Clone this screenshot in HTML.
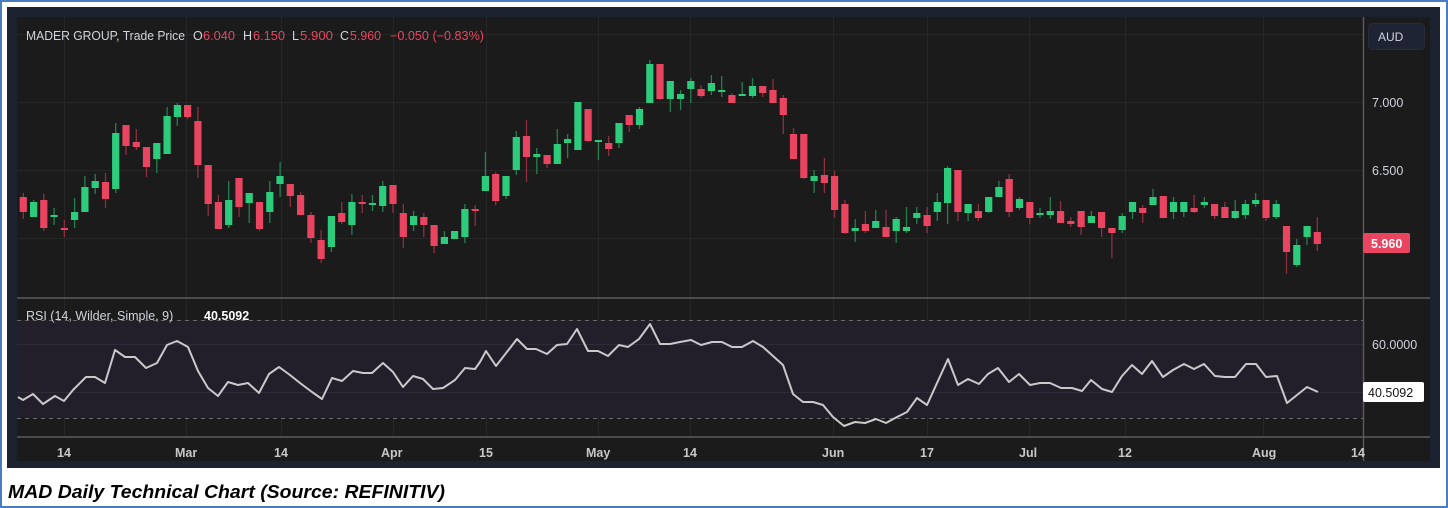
<!DOCTYPE html>
<html><head><meta charset="utf-8"><style>
html,body{margin:0;padding:0;background:#fff;width:1448px;height:508px;overflow:hidden}
svg{display:block}
</style></head><body>
<svg id="s" width="1448" height="508" xmlns="http://www.w3.org/2000/svg" font-family="Liberation Sans, sans-serif">
<rect x="0" y="0" width="1448" height="508" fill="#fff"/>
<rect x="1" y="1" width="1446" height="506" fill="none" stroke="#4a7cc4" stroke-width="2"/>
<rect x="7" y="7" width="1433" height="461" fill="#1d2230"/>
<rect x="17" y="17" width="1413" height="444" fill="#1b1b1b"/>
<g stroke="#272727" stroke-width="1">
<line x1="17" y1="34.5" x2="1363" y2="34.5"/><line x1="17" y1="102.5" x2="1363" y2="102.5"/>
<line x1="17" y1="170.5" x2="1363" y2="170.5"/><line x1="17" y1="238.5" x2="1363" y2="238.5"/>
<line x1="64.5" y1="17" x2="64.5" y2="437"/><line x1="186.5" y1="17" x2="186.5" y2="437"/>
<line x1="281.5" y1="17" x2="281.5" y2="437"/><line x1="393.5" y1="17" x2="393.5" y2="437"/>
<line x1="486.5" y1="17" x2="486.5" y2="437"/><line x1="598.5" y1="17" x2="598.5" y2="437"/>
<line x1="690.5" y1="17" x2="690.5" y2="437"/><line x1="833.5" y1="17" x2="833.5" y2="437"/>
<line x1="927.5" y1="17" x2="927.5" y2="437"/><line x1="1029.5" y1="17" x2="1029.5" y2="437"/>
<line x1="1125.5" y1="17" x2="1125.5" y2="437"/><line x1="1263.5" y1="17" x2="1263.5" y2="437"/>
</g>
<rect x="17" y="320" width="1346" height="98" fill="#241f2c" fill-opacity="0.9"/>
<g stroke="#2f2b38" stroke-width="1"><line x1="17" y1="344.5" x2="1363" y2="344.5"/><line x1="17" y1="392.5" x2="1363" y2="392.5"/></g>
<g stroke="#6a6a6a" stroke-width="1" stroke-dasharray="4 4"><line x1="17" y1="320.5" x2="1363" y2="320.5"/><line x1="17" y1="418.5" x2="1363" y2="418.5"/></g>
<g id="candles"></g>
<polyline fill="none" stroke="#c9c9cc" stroke-width="2" stroke-linejoin="round" points="18,397 23,400 33,394 43,404 55,396 64,401 73,390 86,377 95,377 105,383 115,350 125,357 135,357 146,368 157,363 167,345 177,341 188,347 198,371 208,388 218,396 228,382 238,385 248,383 259,393 269,374 279,367 290,375 300,383 312,392 322,399 332,378 342,381 353,371 363,373 372,373 383,363 393,372 403,387 413,376 423,379 433,389 443,388 455,380 465,368 475,369 480,362 486,351 496,366 517,339 527,349 536,349 547,354 557,345 567,344 577,329 588,351 598,351 608,356 619,345 628,347 639,339 650,324 660,344 670,344 680,342 691,340 701,345 712,342 722,342 732,347 742,347 753,341 763,347 773,356 783,365 793,394 803,402 813,402 823,405 833,417 844,426 855,422 865,423 876,419 886,423 897,417 907,412 917,398 927,405 948,359 958,385 968,379 979,384 988,374 998,368 1009,382 1019,374 1030,385 1040,383 1050,383 1061,388 1072,388 1082,391 1091,380 1102,389 1112,392 1122,376 1132,365 1142,374 1152,361 1163,377 1173,370 1184,364 1194,369 1204,364 1215,376 1225,377 1235,377 1246,364 1256,364 1266,377 1277,376 1287,403 1297,395 1307,387 1318,392"/>
<g stroke="#4c4c4c" stroke-width="2"><line x1="17" y1="298" x2="1430" y2="298"/><line x1="17" y1="437" x2="1430" y2="437"/></g>
<line x1="1363.5" y1="17" x2="1363.5" y2="461" stroke="#5a5a5a" stroke-width="1.5"/>
<rect x="1368.5" y="23.5" width="56" height="26" rx="4" fill="#1e2433" stroke="#262c3a"/>
<text x="1378" y="41" font-size="12" fill="#d1d4dc">AUD</text>
<g font-size="12.5" fill="#d1d4dc">
<text x="1372" y="107">7.000</text><text x="1372" y="175">6.500</text>
<text x="1372" y="349">60.0000</text>
</g>
<rect x="1363" y="233" width="47" height="20" rx="2" fill="#e94560"/>
<text x="1371" y="248" font-size="12.5" fill="#fff" font-weight="bold">5.960</text>
<rect x="1363" y="382" width="61" height="20" rx="2" fill="#fff"/>
<text x="1368" y="397" font-size="12.5" fill="#131313">40.5092</text>
<g font-size="12.5" fill="#c8c8c8" font-weight="bold">
<text x="57" y="457">14</text><text x="175" y="457">Mar</text><text x="274" y="457">14</text>
<text x="381" y="457">Apr</text><text x="479" y="457">15</text><text x="586" y="457">May</text>
<text x="683" y="457">14</text><text x="822" y="457">Jun</text><text x="920" y="457">17</text>
<text x="1019" y="457">Jul</text><text x="1118" y="457">12</text><text x="1252" y="457">Aug</text>
<text x="1351" y="457">14</text>
</g>
<g font-size="12.5">
<text x="26" y="40" fill="#d1d4dc" textLength="159" lengthAdjust="spacingAndGlyphs">MADER GROUP, Trade Price</text>
<text x="193" y="40" fill="#d1d4dc">O</text><text x="203" y="40" fill="#e94560" textLength="32" lengthAdjust="spacingAndGlyphs">6.040</text>
<text x="243" y="40" fill="#d1d4dc">H</text><text x="253" y="40" fill="#e94560" textLength="32" lengthAdjust="spacingAndGlyphs">6.150</text>
<text x="292" y="40" fill="#d1d4dc">L</text><text x="300" y="40" fill="#e94560" textLength="33" lengthAdjust="spacingAndGlyphs">5.900</text>
<text x="340" y="40" fill="#d1d4dc">C</text><text x="350" y="40" fill="#e94560" textLength="31" lengthAdjust="spacingAndGlyphs">5.960</text>
<text x="390" y="40" fill="#e94560" textLength="94" lengthAdjust="spacingAndGlyphs">−0.050 (−0.83%)</text>
<text x="26" y="320" fill="#d1d4dc">RSI (14, Wilder, Simple, 9)</text>
<text x="204" y="320" fill="#ffffff" font-weight="bold">40.5092</text>
</g>
<text x="8" y="498" font-size="18" font-weight="bold" font-style="italic" fill="#000" textLength="437" lengthAdjust="spacingAndGlyphs">MAD Daily Technical Chart (Source: REFINITIV)</text>
</svg>
<script>
var d=[[197,212,193,219,0],[202,217,200,217,1],[200,228,194,231,0],[215,217,208,225,1],[228,229,220,237,0],[212,220,198,228,1],[187,212,176,212,1],[181,188,174,194,1],[182,199,173,208,0],[133,189,123,193,1],[125,146,125,155,0],[142,147,129,150,0],[147,167,147,177,0],[143,159,143,173,1],[116,154,107,154,1],[105,117,103,126,1],[105,117,105,119,0],[121,165,107,178,0],[165,204,165,216,0],[202,229,195,229,0],[200,225,181,228,1],[178,207,178,217,0],[193,203,193,223,1],[202,229,202,231,0],[192,212,181,223,1],[176,184,162,197,1],[184,196,184,207,0],[195,215,192,215,0],[215,238,212,243,0],[240,259,230,263,0],[216,247,216,252,1],[213,222,202,224,0],[202,225,194,235,1],[202,204,195,213,0],[203,204,195,211,1],[186,206,181,212,1],[185,204,185,213,0],[213,237,204,248,0],[216,225,211,231,1],[217,225,213,237,0],[225,246,225,253,0],[237,244,231,244,1],[231,239,231,239,1],[209,237,204,243,1],[209,211,205,226,0],[176,191,152,191,1],[174,201,172,205,0],[176,196,176,199,1],[137,170,131,175,1],[136,157,120,182,0],[154,157,148,174,1],[155,164,155,168,0],[144,164,129,164,1],[139,143,134,158,1],[102,150,102,150,1],[109,141,109,142,0],[140,141,140,160,1],[143,149,136,156,0],[123,143,123,148,1],[115,125,115,132,0],[109,125,107,129,1],[64,103,60,103,1],[64,99,64,100,0],[81,99,81,112,1],[94,99,90,110,1],[81,89,78,103,1],[89,96,85,98,0],[83,91,75,95,1],[90,91,76,97,1],[95,103,93,103,0],[94,95,82,95,1],[86,96,78,98,1],[86,93,86,97,0],[90,103,79,103,0],[98,115,95,134,0],[134,159,128,159,0],[134,178,134,179,0],[176,181,170,193,1],[175,183,158,193,0],[176,210,171,218,0],[204,233,200,234,0],[228,231,219,242,1],[224,231,211,233,0],[221,228,210,228,1],[227,237,210,237,0],[219,231,217,243,1],[227,231,207,233,1],[213,218,207,224,1],[215,226,207,233,0],[202,212,193,221,1],[168,203,166,224,1],[170,212,170,221,0],[204,213,204,221,1],[211,218,204,221,0],[197,212,197,213,1],[187,197,181,197,1],[179,212,174,217,0],[199,208,197,210,1],[202,218,202,224,0],[213,215,208,218,1],[211,215,197,219,1],[211,223,201,223,0],[221,224,217,227,0],[211,227,211,235,0],[216,223,211,223,1],[212,228,212,237,0],[228,233,228,258,0],[216,230,213,233,1],[202,212,202,219,1],[208,213,205,223,0],[197,205,189,205,1],[196,218,196,218,0],[202,212,197,219,1],[202,212,202,217,1],[208,212,195,213,0],[202,205,197,208,1],[204,216,204,219,0],[207,218,202,218,0],[211,218,200,219,1],[204,215,200,219,1],[200,204,193,207,1],[200,218,200,221,0],[204,217,200,219,1],[226,252,226,274,0],[245,265,239,267,1],[226,237,226,245,1],[232,244,217,251,0]];
var g=document.getElementById('candles'),h='';
for(var i=0;i<d.length;i++){var c=d[i],x=23.3+i*10.27,up=c[4];
var bc=up?'#2dcc7d':'#e94560',wc=up?'#23804f':'#8e2f40';
var bh=Math.max(2,c[1]-c[0]);
h+='<line x1="'+x.toFixed(1)+'" x2="'+x.toFixed(1)+'" y1="'+c[2]+'" y2="'+c[3]+'" stroke="'+wc+'" stroke-width="1.3"/>';
h+='<rect x="'+(x-3.6).toFixed(1)+'" y="'+c[0]+'" width="7.2" height="'+bh+'" fill="'+bc+'"/>';}
g.innerHTML=h;
</script>
</body></html>
